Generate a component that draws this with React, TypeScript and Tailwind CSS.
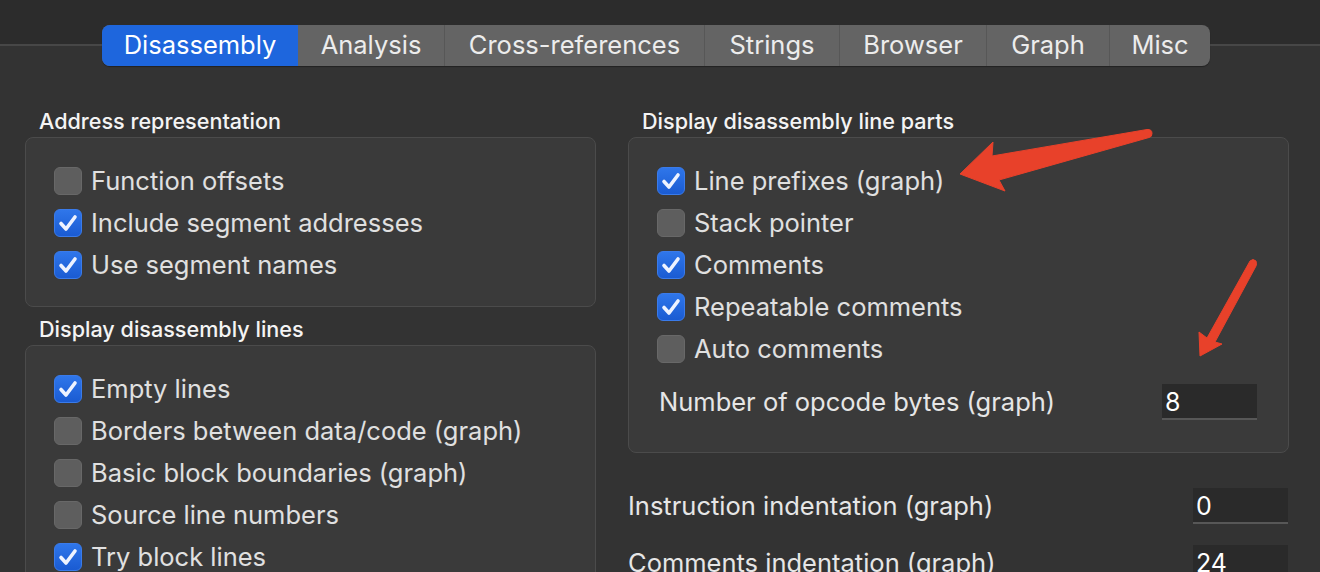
type Item = { label: string; checked: boolean };

const tabs = [
  { name: "Disassembly", w: "w-[196px]" },
  { name: "Analysis", w: "w-[146px]" },
  { name: "Cross-references", w: "w-[260px]" },
  { name: "Strings", w: "w-[135px]" },
  { name: "Browser", w: "w-[147px]" },
  { name: "Graph", w: "w-[123px]" },
  { name: "Misc", w: "w-[101px]" },
];

const addressItems: Item[] = [
  { label: "Function offsets", checked: false },
  { label: "Include segment addresses", checked: true },
  { label: "Use segment names", checked: true },
];

const lineItems: Item[] = [
  { label: "Empty lines", checked: true },
  { label: "Borders between data/code (graph)", checked: false },
  { label: "Basic block boundaries (graph)", checked: false },
  { label: "Source line numbers", checked: false },
  { label: "Try block lines", checked: true },
];

const partItems: Item[] = [
  { label: "Line prefixes (graph)", checked: true },
  { label: "Stack pointer", checked: false },
  { label: "Comments", checked: true },
  { label: "Repeatable comments", checked: true },
  { label: "Auto comments", checked: false },
];

function Checkbox({ checked }: { checked: boolean }) {
  if (!checked) {
    return (
      <span className="block w-[28px] h-[28px] shrink-0 rounded-[6px] bg-[#5e5e5e] border border-[#686868]" />
    );
  }
  return (
    <span className="flex items-center justify-center w-[28px] h-[28px] shrink-0 rounded-[6px] bg-gradient-to-b from-[#2f76ea] to-[#1a5bd2] border border-[#3a7bea]">
      <svg width="24" height="24" viewBox="0 0 24 24" aria-hidden="true">
        <path
          d="M5 12.5 L10 18 L19 6"
          fill="none"
          stroke="#eef3ff"
          strokeWidth="3.6"
          strokeLinecap="round"
          strokeLinejoin="round"
        />
      </svg>
    </span>
  );
}

function CheckRow({ item }: { item: Item }) {
  return (
    <div className="flex items-center gap-[9px] h-[42px]">
      <Checkbox checked={item.checked} />
      <span className="text-[25.5px] text-[#e0e0e0] whitespace-nowrap">{item.label}</span>
    </div>
  );
}

function GroupTitle({ children }: { children: string }) {
  return (
    <div className="pl-[14px] h-[30px] leading-[30px] text-[21.6px] font-medium text-[#f4f4f4] whitespace-nowrap">
      {children}
    </div>
  );
}

function NumberField({ value }: { value: string }) {
  return (
    <div className="w-[95px] h-[36px] bg-[#2a2a2a] border-b-2 border-[#575757] pl-[3px] leading-[36px] text-[25px] text-white">
      {value}
    </div>
  );
}

export default function App() {
  return (
    <div
      className="relative w-[1320px] h-[572px] overflow-hidden bg-[#333333] text-[#dedede]"
      style={{ fontFamily: "Inter, 'Noto Sans', sans-serif" }}
    >
      {/* Tab strip */}
      <div className="pt-[25px] bg-[linear-gradient(to_bottom,#2c2c2c_0,#2c2c2c_44px,#474747_44px,#474747_46px,#333333_46px)]">
        <div className="ml-[102px] flex w-max h-[41px] rounded-[8px] overflow-hidden bg-[#646464] shadow-[0_1px_1px_rgba(0,0,0,0.35)]">
          {tabs.map((t, i) => (
            <div
              key={t.name}
              className={
                i === 0
                  ? `${t.w} flex items-center justify-center bg-[#1e66dd] text-white text-[25.5px]`
                  : `${t.w} flex items-center justify-center text-[#ececec] text-[25.5px] ${i > 1 ? "border-l border-[#575757]" : ""}`
              }
            >
              {t.name}
            </div>
          ))}
        </div>
      </div>

      {/* Settings */}
      <div className="flex gap-[32px] pl-[25px] mt-[40px]">
        <div className="w-[571px]">
          <GroupTitle>Address representation</GroupTitle>
          <div className="mt-[1px] rounded-[8px] border border-[#4b4b4b] bg-[#3a3a3a] pl-[28px] pt-[22px] pb-[20px]">
            {addressItems.map((it) => (
              <CheckRow key={it.label} item={it} />
            ))}
          </div>

          <div className="mt-[7px]">
            <GroupTitle>Display disassembly lines</GroupTitle>
          </div>
          <div className="mt-[1px] rounded-[8px] border border-[#4b4b4b] bg-[#3a3a3a] pl-[28px] pt-[22px] pb-[20px]">
            {lineItems.map((it) => (
              <CheckRow key={it.label} item={it} />
            ))}
          </div>
        </div>

        <div className="w-[661px]">
          <GroupTitle>Display disassembly line parts</GroupTitle>
          <div className="mt-[1px] rounded-[8px] border border-[#4b4b4b] bg-[#3a3a3a] pl-[28px] pr-[31px] pt-[22px] pb-[29px]">
            {partItems.map((it) => (
              <CheckRow key={it.label} item={it} />
            ))}
            <div className="mt-[11px] flex items-center justify-between h-[42px]">
              <span className="pl-[2px] text-[25.5px] text-[#e6e6e6]">Number of opcode bytes (graph)</span>
              <NumberField value="8" />
            </div>
          </div>

          <div className="mt-[32px] flex flex-col gap-[15px] pr-[1px]">
            <div className="flex items-center justify-between h-[42px]">
              <span className="text-[25.5px] text-[#e6e6e6]">Instruction indentation (graph)</span>
              <NumberField value="0" />
            </div>
            <div className="flex items-center justify-between h-[42px]">
              <span className="text-[25.5px] text-[#e6e6e6]">Comments indentation (graph)</span>
              <NumberField value="24" />
            </div>
          </div>
        </div>
      </div>

      {/* Annotation arrows */}
      <svg className="absolute inset-0 pointer-events-none" width="1320" height="572" aria-hidden="true">
        <path
          d="M960 174 L993 142 L992 156 L1147 129.5 Q1152 129 1152 133.5 Q1152 137 1149 137.5 L999 180 L1005 191 Z"
          fill="#e8412a"
          stroke="#e8412a"
          strokeWidth="1"
          strokeLinejoin="round"
        />
        <path
          d="M1200 356 L1199 332 L1207 338 L1250 261 Q1253 258 1256 261 Q1257 264 1256 266 L1215 342 L1222 344 Z"
          fill="#e8412a"
          stroke="#e8412a"
          strokeWidth="1"
          strokeLinejoin="round"
        />
      </svg>
    </div>
  );
}
